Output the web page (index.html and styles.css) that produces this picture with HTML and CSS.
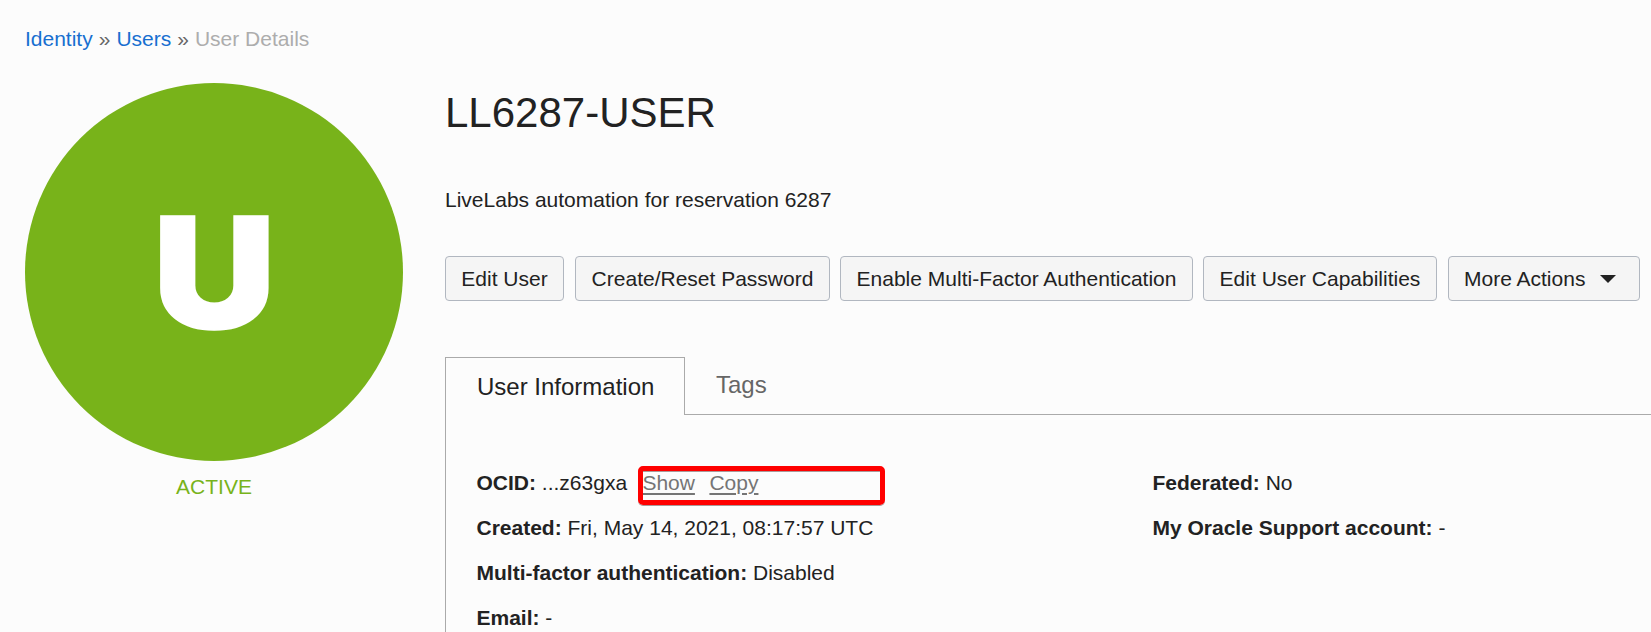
FILE: index.html
```html
<!DOCTYPE html>
<html lang="en">
<head>
<meta charset="utf-8">
<title>User Details</title>
<link rel="stylesheet" href="styles.css">
</head>
<body>
<nav class="breadcrumb"><a href="#">Identity</a><span class="sep">»</span><a href="#">Users</a><span class="sep">»</span><span class="current">User Details</span></nav>
<div class="layout">
  <aside class="status">
    <div class="avatar"><span class="letter">U</span></div>
    <div class="state">ACTIVE</div>
  </aside>
  <main class="detail">
    <h1>LL6287-USER</h1>
    <p class="description">LiveLabs automation for reservation 6287</p>
    <div class="actions">
      <button class="edit">Edit User</button>
      <button class="password">Create/Reset Password</button>
      <button class="mfa">Enable Multi-Factor Authentication</button>
      <button class="capabilities">Edit User Capabilities</button>
      <button class="more">More Actions<svg class="caret" width="16" height="8" viewBox="0 0 16 8"><path d="M0 0H16L8 8Z" fill="#222"/></svg></button>
    </div>
    <div class="tabs">
      <div class="tab active">User Information</div>
      <div class="tab">Tags</div>
    </div>
    <section class="panel">
      <div class="column">
        <div class="row"><b>OCID:</b> ...z63gxa <span class="links"><a href="#">Show</a><a href="#">Copy</a><span class="highlight"></span></span></div>
        <div class="row"><b>Created:</b> Fri, May 14, 2021, 08:17:57 UTC</div>
        <div class="row"><b>Multi-factor authentication:</b> Disabled</div>
        <div class="row"><b>Email:</b> -</div>
      </div>
      <div class="column">
        <div class="row"><b>Federated:</b> No</div>
        <div class="row"><b>My Oracle Support account:</b> -</div>
      </div>
    </section>
  </main>
</div>
</body>
</html>
```
FILE: styles.css
```css
* { box-sizing: border-box; }
body {
  margin: 0;
  height: 632px;
  overflow: hidden;
  padding: 27px 0 0 25px;
  background: #fcfcfc;
  color: #222;
  font: 21px/23px "Liberation Sans", Arial, sans-serif;
}
.breadcrumb a { color: #176fd0; text-decoration: none; }
.breadcrumb .sep { margin: 0 6px; color: #666; }
.breadcrumb .current { color: #adadad; }
.layout { display: flex; gap: 42px; height: 549px; margin-top: 33px; }
.status { flex: none; width: 378px; text-align: center; }
.avatar {
  display: flex;
  align-items: center;
  justify-content: center;
  height: 378px;
  border-radius: 50%;
  background: #78b31a;
}
.letter {
  color: #fff;
  font: 900 156px/189px Inter, sans-serif;
  transform: scaleX(1.09);
  -webkit-text-stroke: 1.5px #fff;
}
.state { margin-top: 14px; color: #78b31a; }
.detail { display: flex; flex-direction: column; flex: 1; min-width: 0; padding-top: 6px; }
h1 { margin: 0 0 52px; font-size: 42px; font-weight: 400; line-height: 47px; }
.description { margin: 0 0 45px; }
.actions { display: flex; margin-bottom: 56px; }
button {
  flex: none;
  height: 45px;
  margin-right: 10px;
  padding: 0;
  border: 1px solid #b1b7c0;
  border-radius: 4px;
  background: #f5f5f5;
  color: #222;
  font: 21px/43px "Liberation Sans", Arial, sans-serif;
  white-space: nowrap;
}
.edit { width: 119px; margin-right: 11px; }
.password { width: 255px; }
.mfa { width: 353px; }
.capabilities { width: 234px; margin-right: 11px; }
.more { width: 192px; margin-right: 0; padding-left: 15px; text-align: left; }
.caret { margin-left: 15px; vertical-align: 3px; }
.tabs { display: flex; flex: none; height: 58px; font-size: 24px; }
.tab {
  padding: 14px 31px 0;
  border-bottom: 1px solid #aaa;
  color: #666;
  line-height: 27px;
  white-space: nowrap;
}
.tab:last-child { flex: 1; }
.active {
  width: 240px;
  padding: 15px 0 0 31px;
  border: 1px solid #aaa;
  border-bottom: 0;
  color: #222;
}
.panel { display: flex; flex: 1; min-height: 0; padding: 45px 0 0 30.5px; border-left: 1px solid #aaa; }
.column { flex: 1; min-width: 0; }
.column:first-child { flex: none; width: 676px; }
.row { height: 45px; line-height: 45px; white-space: nowrap; }
.row:nth-child(4) { height: 37px; }
.links { position: relative; margin-left: 9.5px; }
.links a { margin-right: 14.5px; color: #757575; text-underline-offset: 3px; text-decoration-thickness: 2px; }
.highlight {
  position: absolute;
  top: -5px;
  left: -4px;
  width: 247px;
  height: 39px;
  border: 5px solid #f00;
  border-radius: 5px;
  box-shadow: 0 1px 0 #a99, inset 0 1px 0 #a99;
}
```
